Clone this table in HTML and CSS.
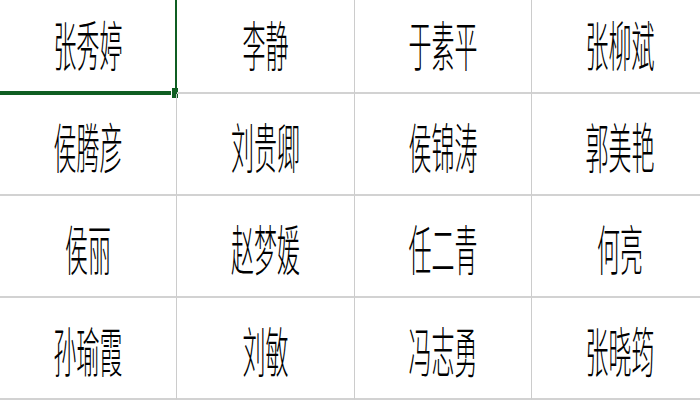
FILE: index.html
```html
<!DOCTYPE html>
<html lang="zh">
<head>
<meta charset="utf-8">
<link rel="stylesheet" href="styles.css">
</head>
<body>
<div class="sheet">
  <div class="cell selected"><span class="txt">张秀婷</span><div class="sel"></div><div class="handle"></div></div>
  <div class="cell"><span class="txt">李静</span></div>
  <div class="cell"><span class="txt">于素平</span></div>
  <div class="cell"><span class="txt">张柳斌</span></div>
  <div class="cell"><span class="txt">侯腾彦</span></div>
  <div class="cell"><span class="txt">刘贵卿</span></div>
  <div class="cell"><span class="txt">侯锦涛</span></div>
  <div class="cell"><span class="txt">郭美艳</span></div>
  <div class="cell"><span class="txt">侯丽</span></div>
  <div class="cell"><span class="txt">赵梦媛</span></div>
  <div class="cell"><span class="txt">任二青</span></div>
  <div class="cell"><span class="txt">何亮</span></div>
  <div class="cell"><span class="txt">孙瑜霞</span></div>
  <div class="cell"><span class="txt">刘敏</span></div>
  <div class="cell"><span class="txt">冯志勇</span></div>
  <div class="cell"><span class="txt">张晓筠</span></div>
</div>
</body>
</html>
```
FILE: styles.css
```css
html, body {
  margin: 0;
  padding: 0;
  background: #ffffff;
  overflow: hidden;
  width: 700px;
  height: 400px;
}
.sheet {
  display: grid;
  grid-template-columns: 177px 178px 177px 177px;
  grid-auto-rows: 102px;
  margin-top: -8px;
  width: 709px;
}
.cell {
  position: relative;
  box-sizing: border-box;
  border-right: 1px solid #cccccc;
  border-bottom: 2px solid #d2d2d2;
  display: flex;
  align-items: center;
  justify-content: center;
  padding-top: 4px;
}
.txt {
  display: inline-block;
  font-family: "Noto Sans CJK SC", sans-serif;
  font-size: 23px;
  font-weight: 300;
  color: #000;
  line-height: 1;
  transform: scaleY(2.35);
}
.sel {
  position: absolute;
  left: -2px;
  top: -2px;
  right: -1px;
  bottom: -3px;
  border-right: 2px solid #0f5e22;
  border-bottom: 4px solid #0f5e22;
}
.handle {
  position: absolute;
  right: -3px;
  bottom: -6px;
  width: 6px;
  height: 10px;
  background: #0f5e22;
  border-left: 1px solid #fff;
  border-right: 1px solid #fff;
}
```
